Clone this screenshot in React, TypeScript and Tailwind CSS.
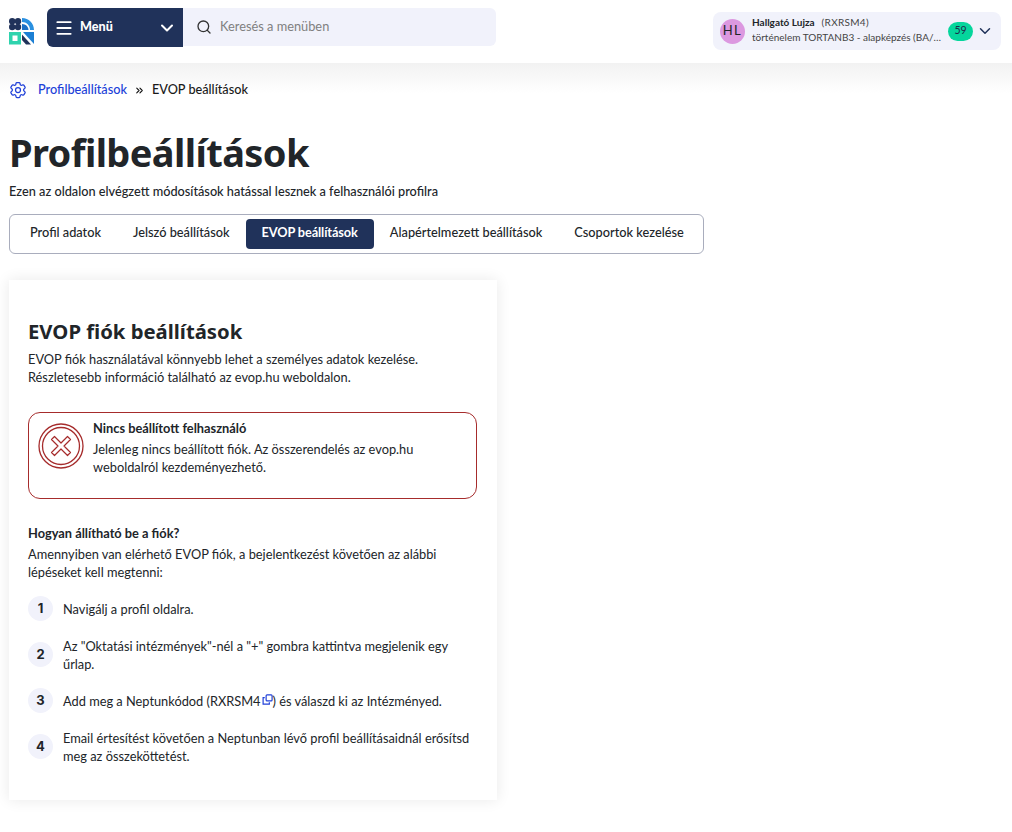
import { ChevronDown, ChevronsRight, Menu, Search } from 'lucide-react';
import { HiOutlineCog6Tooth } from 'react-icons/hi2';

const tabs = ['Profil adatok', 'Jelszó beállítások', 'EVOP beállítások', 'Alapértelmezett beállítások', 'Csoportok kezelése'];

function Logo() {
  return (
    <svg width="25" height="27" viewBox="0 0 25 27" className="shrink-0">
      <g fill="#20325a">
        <circle cx="3.2" cy="3.2" r="3.2" />
        <circle cx="9" cy="3.2" r="3.2" />
        <circle cx="3.2" cy="9" r="3.2" />
        <circle cx="9" cy="9" r="3.2" />
      </g>
      <path d="M13 0C19.8 0 25 5.2 25 12H21C21 7.5 17.5 4 13 4Z" fill="#2a90e0" />
      <path d="M13 6C16.8 6 19.5 8.8 19.5 12H13Z" fill="#1c6fc4" />
      <path fillRule="evenodd" d="M0 14H12V26.5H0ZM3.5 17.5V23H8.5V17.5Z" fill="#2fd3ae" />
      <path d="M14 14H25V26Z" fill="#1c7fd4" />
      <path d="M13 16.5L22 26.5H17L13 22Z" fill="#20325a" />
    </svg>
  );
}

function Step({ n, children }: { n: number; children: React.ReactNode }) {
  return (
    <li className="flex items-center gap-[10px]">
      <span className="w-[25px] h-[25px] rounded-full bg-[#f1f2fb] flex items-center justify-center text-[13px] font-bold text-[#212529] shrink-0 font-['Inter',sans-serif]">
        {n}
      </span>
      <span className="leading-[18px] whitespace-nowrap">{children}</span>
    </li>
  );
}

export default function App() {
  return (
    <div className="min-h-[832px] bg-white font-['Lato',sans-serif] text-[#212529] text-[12.8px]">
      <header className="h-[63px] bg-white flex items-start pl-[9px] pr-[11px] pt-[8px] justify-between">
        <div className="flex items-center">
          <div className="mt-[10px] self-start"><Logo /></div>
          <div className="ml-[13px] w-[136px] h-[39px] bg-[#20325a] rounded-l-[6px] flex items-center pl-[7px] pr-[6px] text-white">
            <Menu className="w-[20px] h-[20px]" strokeWidth={2.2} />
            <span className="ml-[6px] font-black text-[12.6px] -mt-[1px]">Menü</span>
            <ChevronDown className="w-[20px] h-[20px] ml-auto" strokeWidth={2.4} />
          </div>
          <div className="w-[313px] h-[38px] bg-[#f1f2fb] rounded-r-[6px] flex items-center pl-[13px] self-start">
            <Search className="w-[16px] h-[16px] text-[#333]" />
            <span className="ml-[8px] text-[#808080] text-[12.8px] -mt-[1px]">Keresés a menüben</span>
          </div>
        </div>
        <div className="mt-[4px] w-[288px] h-[38px] bg-[#f1f2fb] rounded-[8px] flex items-center pl-[7px] pr-[7px]">
          <div className="w-[25px] h-[25px] rounded-full bg-[#dc98e0] flex items-center justify-center text-[13px] tracking-[1.5px] shrink-0">
            HL
          </div>
          <div className="ml-[7px] w-[195px] shrink-0 text-[10px] leading-[15px] -mt-[2px]">
            <div className="whitespace-nowrap">
              <span className="font-bold">Hallgató Lujza</span>
              <span className="ml-[7px] text-[#444] text-[10px] tracking-[0.3px]">(RXRSM4)</span>
            </div>
            <div className="truncate text-[#444] text-[10px] mt-[0.5px]">történelem TORTANB3 - alapképzés (BA/BSc/BProf)</div>
          </div>
          <div className="ml-[1px] w-[25px] h-[19px] rounded-full bg-[#05d69c] text-[#1d2b4d] flex items-center justify-center text-[10.5px] shrink-0">
            59
          </div>
          <ChevronDown className="w-[18px] h-[18px] ml-[3px] text-[#20325a]" />
        </div>
      </header>

      <main className="bg-gradient-to-b from-[#f2f2f2] to-white to-[30px] px-[9px]">
        <nav className="h-[52px] pt-[2px] flex items-center font-medium text-[12.7px]">
          <HiOutlineCog6Tooth className="w-[20px] h-[20px] -ml-[1px] text-[#2040d8]" />
          <span className="ml-[10px] text-[#2040d8]">Profilbeállítások</span>
          <ChevronsRight className="ml-[7px] w-[11px] h-[11px] text-[#111]" strokeWidth={2.4} />
          <span className="ml-[7px] text-[#1a1a1a]">EVOP beállítások</span>
        </nav>

        <h1 className="mt-[10px] text-[38px] tracking-[-0.6px] leading-[54px] font-bold font-['Noto_Sans',sans-serif] text-[#212529]">Profilbeállítások</h1>
        <p className="mt-[3px] leading-[18px] font-medium text-[12.72px]">Ezen az oldalon elvégzett módosítások hatással lesznek a felhasználói profilra</p>

        <div className="mt-[14px] w-[695px] h-[40px] border border-[#a9adbd] rounded-[6px] flex items-center pl-[4px] font-medium text-[12.75px]">
          {tabs.map((tab) => (
            <div
              key={tab}
              className={
                tab === 'EVOP beállítások'
                  ? 'h-[30px] px-[16px] pb-[2px] rounded-[4px] bg-[#20325a] text-white font-bold tracking-[-0.1px] flex items-center whitespace-nowrap'
                  : 'h-[30px] px-[16px] pb-[2px] flex items-center text-[#212529] whitespace-nowrap'
              }
            >
              {tab}
            </div>
          ))}
        </div>

        <section className="mt-[26px] w-[488px] h-[520px] bg-white shadow-[0_0_14px_rgba(0,0,0,0.09)] pl-[19px] pr-[20px] pt-[37px]">
          <h2 className="text-[20.3px] leading-[29px] font-bold font-['Noto_Sans',sans-serif]">EVOP fiók beállítások</h2>
          <p className="mt-[5px] leading-[17.5px]">
            EVOP fiók használatával könnyebb lehet a személyes adatok kezelése.
            <br />
            Részletesebb információ található az evop.hu weboldalon.
          </p>

          <div className="mt-[26px] h-[87px] border border-[#a62c2c] rounded-[12px] flex pl-[9px] pr-[10px] pt-[5px]">
            <svg width="46" height="46" viewBox="0 0 46 46" fill="none" stroke="#a62c2c" className="shrink-0 mt-[5px]">
              <circle cx="23" cy="23" r="22" strokeWidth="1.3" />
              <circle cx="23" cy="23" r="18.5" strokeWidth="1.3" />
              <path d="M16.5 13.5L23 20L29.5 13.5L32.5 16.5L26 23L32.5 29.5L29.5 32.5L23 26L16.5 32.5L13.5 29.5L20 23L13.5 16.5Z" strokeWidth="1.2" strokeLinejoin="round" />
            </svg>
            <div className="ml-[9px]">
              <div className="font-bold leading-[20px]">Nincs beállított felhasználó</div>
              <div className="mt-[2px] leading-[18px]">
                Jelenleg nincs beállított fiók. Az összerendelés az evop.hu
                <br />
                weboldalról kezdeményezhető.
              </div>
            </div>
          </div>

          <h3 className="mt-[24px] font-bold leading-[20px]">Hogyan állítható be a fiók?</h3>
          <p className="mt-[3px] leading-[17.5px]">
            Amennyiben van elérhető EVOP fiók, a bejelentkezést követően az alábbi
            <br />
            lépéseket kell megtenni:
          </p>

          <ol className="mt-[15px] flex flex-col gap-[15.5px]">
            <Step n={1}>Navigálj a profil oldalra.</Step>
            <Step n={2}>
              Az "Oktatási intézmények"-nél a "+" gombra kattintva megjelenik egy
              <br />
              űrlap.
            </Step>
            <Step n={3}>
              Add meg a Neptunkódod (RXRSM4
              <svg viewBox="0 0 12 12" width="11" height="11" fill="none" stroke="#2040d8" strokeWidth="1.3" className="inline-block align-[1px] ml-[1px]">
                <rect x="4.5" y="1" width="6.5" height="6.5" rx="1" />
                <path d="M3 4H1.2V11H8V9" />
              </svg>
              ) és válaszd ki az Intézményed.
            </Step>
            <Step n={4}>
              Email értesítést követően a Neptunban lévő profil beállításaidnál erősítsd
              <br />
              meg az összeköttetést.
            </Step>
          </ol>
        </section>
      </main>
    </div>
  );
}
